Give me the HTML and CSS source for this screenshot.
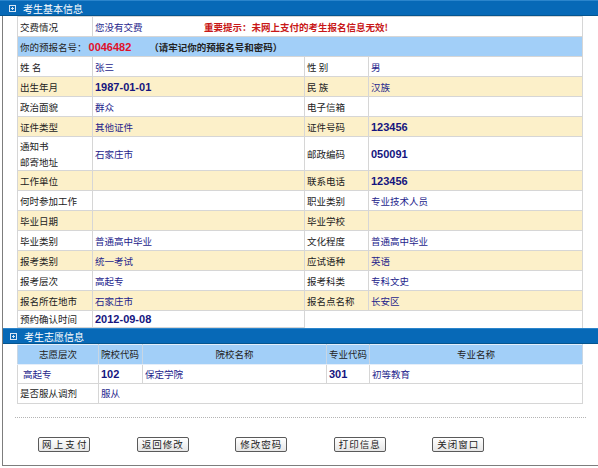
FILE: index.html
```html
<!DOCTYPE html>
<html lang="zh">
<head>
<meta charset="utf-8">
<title>考生基本信息</title>
<link rel="stylesheet" href="styles.css">
</head>
<body>
<div class="bar bar-top">
  <svg class="bar-icon" width="7" height="7" viewBox="0 0 7 7"><rect x="0.5" y="0.5" width="6" height="6" fill="none" stroke="#d8e6f4" stroke-width="1"/><path d="M2 3.5H5M3.5 2V5" stroke="#d8e6f4" stroke-width="1"/></svg>
  <span>考生基本信息</span>
</div>
<div class="frame">
  <table class="info">
    <colgroup><col class="c1"><col class="c2"><col class="c3"><col class="c4"></colgroup>
    <tr>
      <td>交费情况</td>
      <td colspan="3" class="v"><span class="unpaid">您没有交费</span><span class="warn">重要提示：未网上支付的考生报名信息无效!</span></td>
    </tr>
    <tr class="b">
      <td colspan="4"><span class="regno-label">你的预报名号：</span><span class="regno">0046482</span><span class="remember">（请牢记你的预报名号和密码）</span></td>
    </tr>
    <tr>
      <td>姓 名</td><td class="v">张三</td><td>性 别</td><td class="v">男</td>
    </tr>
    <tr class="y">
      <td>出生年月</td><td class="v num">1987-01-01</td><td>民 族</td><td class="v">汉族</td>
    </tr>
    <tr>
      <td>政治面貌</td><td class="v">群众</td><td>电子信箱</td><td class="v"></td>
    </tr>
    <tr class="y">
      <td>证件类型</td><td class="v">其他证件</td><td>证件号码</td><td class="v num">123456</td>
    </tr>
    <tr class="tall">
      <td class="two">通知书<br>邮寄地址</td><td class="v">石家庄市</td><td>邮政编码</td><td class="v num">050091</td>
    </tr>
    <tr class="y">
      <td>工作单位</td><td class="v"></td><td>联系电话</td><td class="v num">123456</td>
    </tr>
    <tr>
      <td>何时参加工作</td><td class="v"></td><td>职业类别</td><td class="v">专业技术人员</td>
    </tr>
    <tr class="y">
      <td>毕业日期</td><td class="v"></td><td>毕业学校</td><td class="v"></td>
    </tr>
    <tr>
      <td>毕业类别</td><td class="v">普通高中毕业</td><td>文化程度</td><td class="v">普通高中毕业</td>
    </tr>
    <tr class="y">
      <td>报考类别</td><td class="v">统一考试</td><td>应试语种</td><td class="v">英语</td>
    </tr>
    <tr>
      <td>报考层次</td><td class="v">高起专</td><td>报考科类</td><td class="v">专科文史</td>
    </tr>
    <tr class="y">
      <td>报名所在地市</td><td class="v">石家庄市</td><td>报名点名称</td><td class="v">长安区</td>
    </tr>
    <tr class="last">
      <td>预约确认时间</td><td class="v num">2012-09-08</td><td colspan="2" class="blank"></td>
    </tr>
  </table>

  <div class="bar bar-mid">
    <svg class="bar-icon" width="7" height="7" viewBox="0 0 7 7"><rect x="0.5" y="0.5" width="6" height="6" fill="none" stroke="#d8e6f4" stroke-width="1"/><path d="M2 3.5H5M3.5 2V5" stroke="#d8e6f4" stroke-width="1"/></svg>
    <span>考生志愿信息</span>
  </div>

  <table class="info wish">
    <colgroup><col class="w1"><col class="w2"><col class="w3"><col class="w4"><col class="w5"></colgroup>
    <tr class="b head">
      <td class="ctr">志愿层次</td><td>院校代码</td><td class="ctr">院校名称</td><td>专业代码</td><td class="ctr">专业名称</td>
    </tr>
    <tr>
      <td class="v pad">高起专</td><td class="v num">102</td><td class="v">保定学院</td><td class="v num">301</td><td class="v">初等教育</td>
    </tr>
    <tr>
      <td>是否服从调剂</td><td colspan="4" class="v">服从</td>
    </tr>
  </table>

  <div class="dots"></div>

  <div class="actions">
    <div class="slot"><button class="btn spaced">网 上 支 付</button></div>
    <div class="slot"><button class="btn">返回修改</button></div>
    <div class="slot"><button class="btn">修改密码</button></div>
    <div class="slot"><button class="btn">打印信息</button></div>
    <div class="slot"><button class="btn">关闭窗口</button></div>
  </div>
</div>
</body>
</html>
```
FILE: styles.css
```css
* { box-sizing: border-box; }

body {
  margin: 0;
  width: 598px;
  height: 468px;
  overflow: hidden;
  background: #fff;
  font-family: "Noto Sans CJK SC", "Liberation Sans", sans-serif;
  font-size: 9.5px;
  color: #222;
}

.bar {
  height: 16px;
  background: #0769b7;
  border-top: 1px solid #2b85cc;
  border-bottom: 1px solid #05558f;
  color: #fff;
  display: flex;
  align-items: center;
  font-size: 10px;
}

.bar-top { padding-left: 9px; }
.bar-mid { padding-left: 7px; }

.bar-icon { margin-right: 7px; }

.frame {
  margin-left: 2px;
  border-left: 1px solid #7d7d7d;
  border-bottom: 1px solid #7d7d7d;
  height: 450px;
}

.info {
  margin-left: 14px;
  width: 565px;
  border-collapse: collapse;
  table-layout: fixed;
}

.info td {
  border: 1px solid #d6d6d6;
  height: 20px;
  padding: 0 2px 0 2px;
  vertical-align: middle;
  line-height: 12px;
  white-space: nowrap;
  overflow: hidden;
}

.c1 { width: 75px; }
.c2 { width: 212px; }
.c3 { width: 64px; }
.c4 { width: 214px; }

.y { background: #fcf0c9; }
.b { background: #a2cff8; }

.v { color: #1e1e8c; }

.info .num {
  font-family: "Liberation Sans", Arial, sans-serif;
  font-weight: bold;
  font-size: 11px;
  color: #15157f;
}

.info .tall td { height: 34px; }
.info .two { line-height: 16px; }

.unpaid {
  display: inline-block;
  width: 109px;
}

.warn {
  color: #c81818;
  font-weight: bold;
}

.regno-label { color: #222; }

.regno {
  font-family: "Liberation Sans", Arial, sans-serif;
  font-weight: bold;
  font-size: 11px;
  color: #e0102a;
  margin-left: 2px;
}

.remember {
  margin-left: 18px;
  font-weight: bold;
  color: #222;
}

.info .last td { height: 17px; }
.info .blank {
  border-top: 1px solid #d6d6d6;
  border-bottom: none;
  border-left: 1px solid #d6d6d6;
  background: #fff;
}

.w1 { width: 81px; }
.w2 { width: 44px; }
.w3 { width: 184px; }
.w4 { width: 43px; }
.w5 { width: 213px; }

.info.wish td { height: 19.5px; }
.info .head td { border-color: #e4eefa #c8d6e4; color: #222; }
.info .ctr { text-align: center; }
.info .pad { padding-left: 5px; }

.dots {
  margin: 13px 0 0 12px;
  width: 571px;
  border-top: 1px dotted #b4b4b4;
}

.actions {
  display: flex;
  margin: 19px 0 0 12px;
}

.slot {
  width: 98.5px;
  display: flex;
  justify-content: center;
}

.btn {
  width: 52px;
  height: 15px;
  padding: 0;
  margin: 0;
  font-family: "Noto Sans CJK SC", sans-serif;
  font-size: 9.5px;
  line-height: 12px;
  letter-spacing: 1px;
  color: #222;
  background: linear-gradient(#ffffff, #e6e6e6);
  border: 1px solid #5a5a5a;
  border-radius: 2px;
}

.btn.spaced { letter-spacing: 0; }
```
